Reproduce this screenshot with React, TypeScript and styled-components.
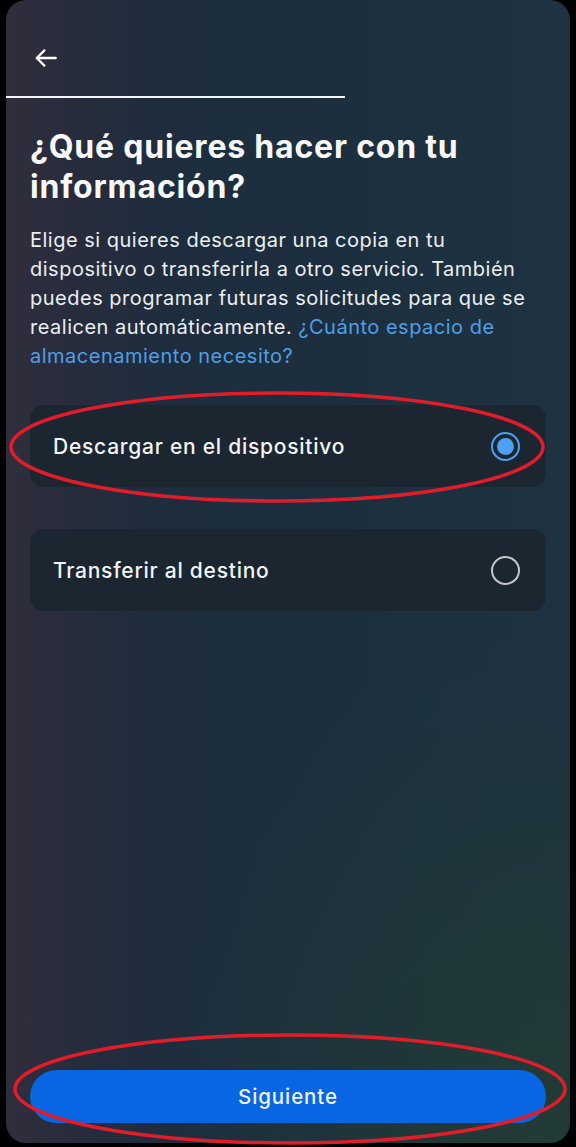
import React, { useState } from "react";
import styled, { createGlobalStyle } from "styled-components";

const Global = createGlobalStyle`
  html, body { margin: 0; padding: 0; background: #000; }
  body { font-family: Inter, "Noto Sans", sans-serif; -webkit-font-smoothing: antialiased; }
  * { box-sizing: border-box; }
`;

const Screen = styled.div`
  position: relative;
  width: 576px;
  height: 1147px;
  background: #000;
  padding: 0 6px 4px 6px;
`;

const Panel = styled.div`
  height: 1143px;
  border-radius: 20px;
  overflow: hidden;
  display: flex;
  flex-direction: column;
  background:
    radial-gradient(ellipse 70% 45% at 95% 100%, rgba(34, 60, 52, 0.9) 0%, rgba(34, 60, 52, 0) 100%),
    linear-gradient(90deg, #302e3c 0%, #272c3c 12%, #1d2d3e 30%, #1c2f3f 60%, #1e3241 100%);
`;

const Header = styled.div`
  height: 96px;
  display: flex;
  align-items: center;
  padding: 0 0 0 25px;
`;

const BackButton = styled.button`
  background: none;
  border: 0;
  padding: 0;
  width: 30px;
  height: 30px;
  display: flex;
  align-items: center;
  justify-content: center;
  color: #ffffff;
  cursor: pointer;
  margin-top: 20px;
`;

const Progress = styled.div`
  height: 2px;
  width: 339px;
  background: #f2f6f8;
`;

const Content = styled.div`
  flex: 1;
  display: flex;
  flex-direction: column;
  padding: 29px 24px 20px 24px;
`;

const Title = styled.h1`
  margin: 0;
  font-size: 32px;
  line-height: 40px;
  font-weight: 700;
  color: #f7f8f9;
  letter-spacing: 0.8px;
`;

const Description = styled.p`
  margin: 19px 0 0 0;
  font-size: 20px;
  line-height: 29px;
  color: #eceef0;
  font-weight: 400;
  letter-spacing: 0.5px;
`;

const Link = styled.a`
  color: #4f9fe6;
  text-decoration: none;
`;

const Options = styled.div`
  display: flex;
  flex-direction: column;
  gap: 42px;
  margin-top: 34px;
`;

const Option = styled.label`
  height: 82px;
  border-radius: 14px;
  background: #1b2631;
  display: flex;
  align-items: center;
  justify-content: space-between;
  padding: 0 26px 0 23px;
  cursor: pointer;
`;

const OptionText = styled.span`
  font-size: 21px;
  font-weight: 500;
  color: #f3f4f5;
  letter-spacing: 0.75px;
`;

const Radio = styled.span<{ $checked: boolean }>`
  width: 29px;
  height: 29px;
  border-radius: 50%;
  border: 2.5px solid ${(p) => (p.$checked ? "#4da0f2" : "#c3c7cb")};
  display: flex;
  align-items: center;
  justify-content: center;
  &::after {
    content: "";
    width: 17px;
    height: 17px;
    border-radius: 50%;
    background: ${(p) => (p.$checked ? "#4da0f2" : "transparent")};
  }
`;

const Spacer = styled.div`
  flex: 1;
`;

const NextButton = styled.button`
  height: 53px;
  width: 100%;
  border: 0;
  border-radius: 27px;
  background: #0866e3;
  color: #eef3fb;
  font-family: Inter, "Noto Sans", sans-serif;
  font-size: 20.5px;
  font-weight: 500;
  letter-spacing: 0.9px;
  cursor: pointer;
`;

const Annotations = styled.svg`
  position: absolute;
  left: 0;
  top: 0;
  pointer-events: none;
`;

const options = ["Descargar en el dispositivo", "Transferir al destino"];

export default function App() {
  const [selected, setSelected] = useState(0);
  return (
    <Screen>
      <Global />
      <Panel>
        <Header>
          <BackButton aria-label="Atrás">
            <svg width="26" height="26" viewBox="0 0 24 24" fill="none" stroke="currentColor" strokeWidth="2.1" strokeLinecap="round" strokeLinejoin="round">
              <path d="M21 12H3.5" />
              <path d="M10.5 5 3.5 12l7 7" />
            </svg>
          </BackButton>
        </Header>
        <Progress />
        <Content>
          <Title>¿Qué quieres hacer con tu información?</Title>
          <Description>
            Elige si quieres descargar una copia en tu dispositivo o transferirla a otro servicio. También puedes
            programar futuras solicitudes para que se realicen automáticamente.{" "}
            <Link href="#">¿Cuánto espacio de almacenamiento necesito?</Link>
          </Description>
          <Options>
            {options.map((o, i) => (
              <Option key={o} onClick={() => setSelected(i)}>
                <OptionText>{o}</OptionText>
                <Radio $checked={selected === i} />
              </Option>
            ))}
          </Options>
          <Spacer />
          <NextButton>Siguiente</NextButton>
        </Content>
      </Panel>
      <Annotations width="576" height="1147" viewBox="0 0 576 1147">
        <ellipse cx="277" cy="447" rx="266" ry="54" fill="none" stroke="#e11d2a" strokeWidth="3.5" />
        <ellipse cx="290" cy="1089" rx="275" ry="54" fill="none" stroke="#e11d2a" strokeWidth="3.5" />
      </Annotations>
    </Screen>
  );
}
